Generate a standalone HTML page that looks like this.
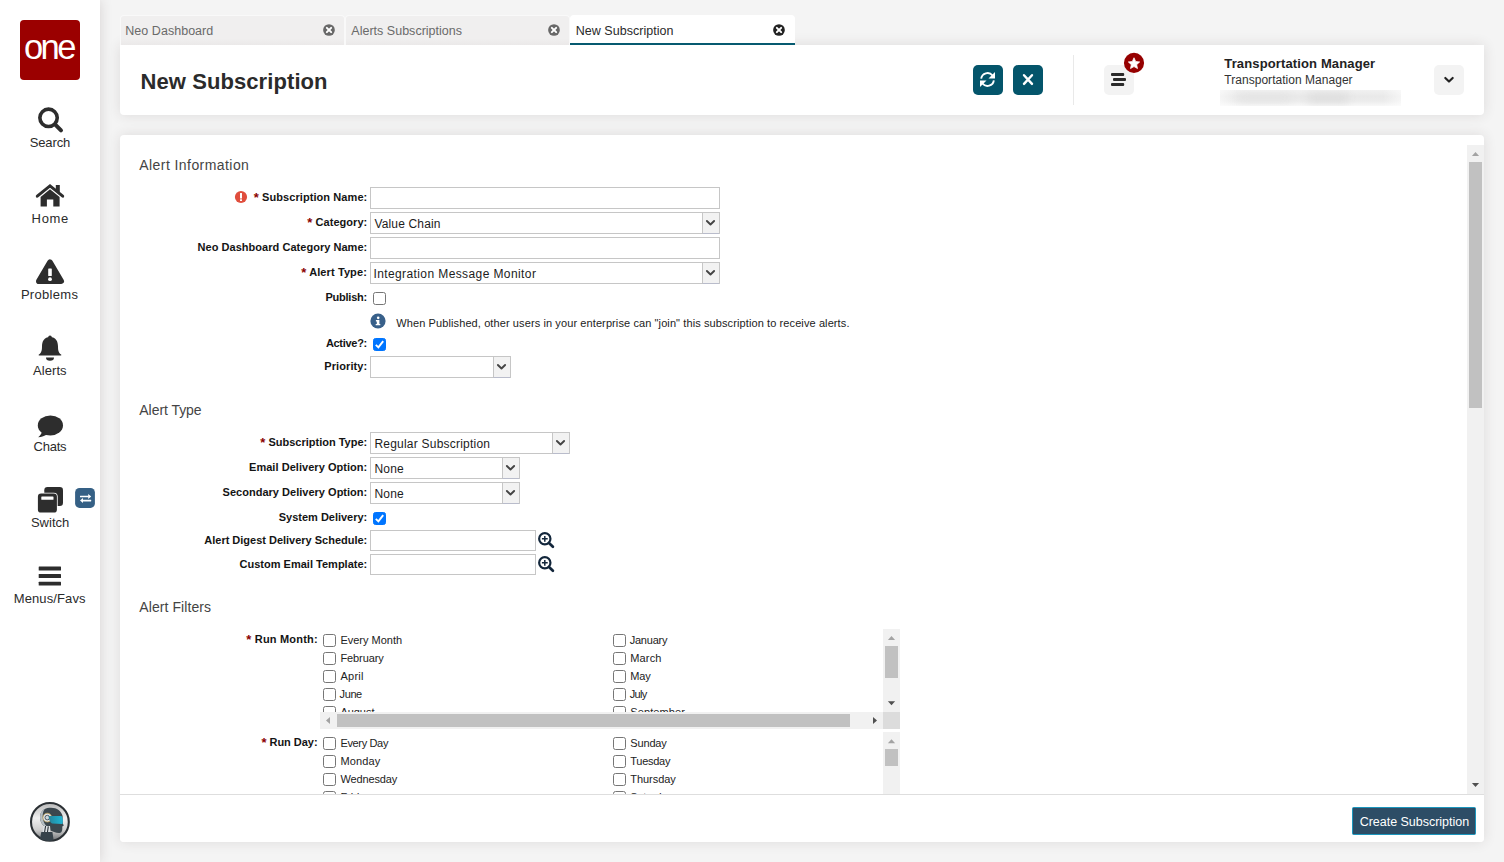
<!DOCTYPE html>
<html lang="en">
<head>
<meta charset="utf-8">
<title>New Subscription</title>
<style>
*{box-sizing:border-box;margin:0;padding:0}
html,body{width:1504px;height:862px;overflow:hidden}
body{background:#f4f4f4;font-family:"Liberation Sans",sans-serif;color:#222;position:relative}
.abs{position:absolute}
.t{position:absolute;white-space:nowrap;line-height:1}
#side{position:absolute;left:0;top:0;width:100px;height:862px;background:#fff;box-shadow:0 0 12px rgba(60,40,40,.16)}
#logo{position:absolute;left:20px;top:20px;width:60px;height:60px;border-radius:4px;background:#9b0000}
.nav{position:absolute;left:0;width:100px;text-align:center;font-size:13px;color:#2b2b2b;line-height:1}
.tab{position:absolute;top:15px;height:30px;border-radius:4px 4px 0 0;background:linear-gradient(180deg,#f0efef 0,#f0efef 78%,#ebe9e9 100%);border:1px solid #f9f9f9;border-bottom:none}
.tab.on{background:#fff;border:none;border-bottom:2px solid #065a70}
#head{position:absolute;left:120px;top:45px;width:1364px;height:70px;background:#fff;border-radius:0 0 4px 4px;box-shadow:0 0 13px rgba(60,40,40,.12)}
#main{position:absolute;left:120px;top:135px;width:1364px;height:707px;background:#fff;border-radius:4px;box-shadow:0 0 13px rgba(60,40,40,.12)}
.sq{position:absolute;width:30px;height:30px;border-radius:5px}
.lbl{position:absolute;font-size:11px;font-weight:700;color:#111;white-space:nowrap;line-height:1;text-align:right}
.lbl i{font-style:normal;color:#8b0000;font-size:13px;line-height:0;position:relative;top:1.6px;margin-left:-.8px}
.inp{position:absolute;background:#fff;border:1px solid #c6c6c6;height:22px}
.inp .v{position:absolute;left:4px;top:4px;font-size:12px;line-height:14px;white-space:nowrap;color:#1a1a1a}
.trg{position:absolute;right:0;top:0;width:17px;background:#f2f2f2;border-left:1px solid #c6c6c6;border-bottom:1px solid #b9bccb}
.cb{position:absolute;width:13px;height:13px;border:1px solid #767676;border-radius:2.5px;background:#fff}
.cb.on{background:#0075ff;border-color:#0075ff}
.cl{position:absolute;font-size:11px;white-space:nowrap;line-height:1;color:#222}
.sec{position:absolute;left:139px;font-size:14px;color:#444;white-space:nowrap;line-height:1}
</style>
</head>
<body>
<div id="side"></div>
<div id="logo"></div>
<span class="t" style="left:23.90px;top:29.70px;font-size:34.6px;letter-spacing:-2.531px;color:#fff;">one</span>
<svg class="abs" style="left:0;top:0" width="100" height="862" viewBox="0 0 100 862">
<g fill="#2d2d2d" stroke="none">
<!-- search -->
<circle cx="48.55" cy="117.8" r="8.7" fill="none" stroke="#2d2d2d" stroke-width="3.6"/>
<path d="M55.3 124.6 L61 130.4" stroke="#2d2d2d" stroke-width="4" stroke-linecap="round" fill="none"/>
<!-- home -->
<path d="M37.3 196.2 L50 185.9 L62.7 196.2" fill="none" stroke="#2d2d2d" stroke-width="3" stroke-linecap="round" stroke-linejoin="miter"/>
<rect x="55.8" y="185" width="4" height="7"/>
<path d="M40.6 197 L50 189.3 L59.6 197 V206.4 H53.3 V199.6 H46.9 V206.4 H40.6 Z"/>
<!-- problems -->
<path d="M50 262.2 L61.2 281.2 H38.8 Z" stroke="#2d2d2d" stroke-width="5.6" stroke-linejoin="round"/>
<rect x="48.2" y="268.4" width="3.6" height="7.6" rx=".6" fill="#fff"/>
<circle cx="50" cy="279.2" r="1.9" fill="#fff"/>
<!-- bell -->
<circle cx="50" cy="337.2" r="1.8"/>
<path d="M50 337 C44 337 42 341.5 42 346.5 C42 351 41.2 352.8 38.9 354.6 C38.4 355 38.7 355.6 39.3 355.6 H60.7 C61.3 355.6 61.6 355 61.1 354.6 C58.8 352.8 58 351 58 346.5 C58 341.5 56 337 50 337 Z"/>
<path d="M46 357.5 H54 A4 3.2 0 0 1 46 357.5 Z"/>
<!-- chat -->
<ellipse cx="50.4" cy="425.4" rx="12.6" ry="10"/>
<path d="M42.5 430 C42 433 40.5 435.5 38.2 437.3 C41.5 437.2 45 436 47.5 434 Z"/>
<!-- switch -->
<rect x="44.3" y="487" width="18.7" height="19" rx="3.2"/>
<rect x="37.1" y="492.8" width="20.6" height="20.5" rx="3.8" fill="#fff"/>
<rect x="37.9" y="493.6" width="19" height="19" rx="3.2"/>
<rect x="41.3" y="496.4" width="12.2" height="3.4" rx=".6" fill="#fff"/>
<!-- bars -->
<rect x="38.7" y="566.6" width="22.3" height="3.8" rx=".5"/>
<rect x="38.7" y="574.1" width="22.3" height="3.8" rx=".5"/>
<rect x="38.7" y="581.8" width="22.3" height="3.8" rx=".5"/>
</g>
<!-- switch badge -->
<rect x="75.1" y="488" width="19.8" height="19.9" rx="4.4" fill="#356085"/>
<g fill="#fff">
<rect x="80" y="495.7" width="8.6" height="1.6" rx=".3"/><path d="M88.2 494 L91.2 496.5 L88.2 499 Z"/>
<rect x="82.6" y="499.8" width="8.6" height="1.6" rx=".3"/><path d="M83 498.1 L80 500.6 L83 503.1 Z"/>
</g>
<!-- avatar -->
<defs><linearGradient id="vg" x1="0" y1="0" x2="1" y2="0"><stop offset="0" stop-color="#2b8297"/><stop offset=".5" stop-color="#1f9fba"/><stop offset="1" stop-color="#22b4d2"/></linearGradient><linearGradient id="ag" x1="0" y1="0" x2="0" y2="1"><stop offset="0" stop-color="#b9b9b9"/><stop offset=".4" stop-color="#f0f0f0"/><stop offset=".7" stop-color="#d0d0d0"/><stop offset="1" stop-color="#6f7275"/></linearGradient></defs>
<circle cx="49.9" cy="821.9" r="18.9" fill="url(#ag)" stroke="#2b3034" stroke-width="2.1"/>
<path d="M43.4 825.5 L50.2 826 L49.8 832.2 L42.6 832.2 Z" fill="#dde2e5"/>
<path d="M45.6 826 L44.6 832 M48.3 826.4 L47.5 832" stroke="#2b3238" stroke-width="1.1" fill="none"/>
<path d="M41.3 832 H52.4 L53.6 840 C49 841.6 44 841 40 838.8 Z" fill="#36424a"/>
<path d="M44 826 C40.5 823 39.3 818 40.5 814 C42 809.5 46 807.7 51 807.7 C57 807.7 61.5 811 62.6 816 L62.8 823.5 L63.8 825.6 L62.3 826.6 L62.3 829 C62.3 831.5 61 833.2 59 833 C55.5 832.7 52.5 831.5 50.5 830.4 L50 826 Z" fill="#3b474e"/>
<path d="M44 826 C40.5 823 39.3 818 40.5 814 C41.3 811.6 42.8 810 44.5 809 C42.6 812 42.2 816 43.2 820 C43.8 822.5 45 824.5 46.5 826 Z" fill="#b4bdc2"/>
<circle cx="47.3" cy="817.6" r="4.4" fill="#dfe6ea" stroke="#c9a24f" stroke-width=".7"/>
<circle cx="47.3" cy="817.6" r="2.3" fill="#cfd6da" stroke="#46525a" stroke-width=".9"/>
<path d="M48.6 816 L61.4 815.9 C63 817 63.2 822.4 62.3 824 L52 823.6 C50.2 822.4 48.8 819.5 48.6 816 Z" fill="url(#vg)"/>
</svg>
<span class="t" style="left:29.70px;top:136.00px;font-size:13px;letter-spacing:-0.112px;color:#2b2b2b;">Search</span><span class="t" style="left:31.60px;top:212.00px;font-size:13px;letter-spacing:0.651px;color:#2b2b2b;">Home</span><span class="t" style="left:20.90px;top:288.00px;font-size:13px;letter-spacing:0.299px;color:#2b2b2b;">Problems</span><span class="t" style="left:33.00px;top:364.00px;font-size:13px;letter-spacing:0.074px;color:#2b2b2b;">Alerts</span><span class="t" style="left:33.50px;top:440.00px;font-size:13px;letter-spacing:-0.215px;color:#2b2b2b;">Chats</span><span class="t" style="left:30.90px;top:516.00px;font-size:13px;letter-spacing:0.028px;color:#2b2b2b;">Switch</span><span class="t" style="left:13.70px;top:592.00px;font-size:13px;letter-spacing:0.111px;color:#2b2b2b;">Menus/Favs</span>

<div id="head"></div>
<div class="tab" style="left:120px;width:224.5px"></div><div class="tab" style="left:345px;width:224.5px"></div><div class="tab on" style="left:570px;width:225px"></div>
<span class="t" style="left:125.30px;top:24.75px;font-size:12.5px;letter-spacing:0.033px;color:#6a6a6a;">Neo Dashboard</span><span class="t" style="left:351.30px;top:24.75px;font-size:12.5px;letter-spacing:0.015px;color:#6a6a6a;">Alerts Subscriptions</span><span class="t" style="left:575.70px;top:24.75px;font-size:12.5px;letter-spacing:0.032px;color:#2a2a2a;">New Subscription</span><svg class="abs" style="left:321.9px;top:22.9px" width="14" height="14" viewBox="-7 -7 14 14"><circle r="5.85" fill="#686868"/><path d="M-2.15 -2.15 L2.15 2.15 M2.15 -2.15 L-2.15 2.15" stroke="#fff" stroke-width="2" stroke-linecap="round"/></svg><svg class="abs" style="left:547.0px;top:22.9px" width="14" height="14" viewBox="-7 -7 14 14"><circle r="5.85" fill="#686868"/><path d="M-2.15 -2.15 L2.15 2.15 M2.15 -2.15 L-2.15 2.15" stroke="#fff" stroke-width="2" stroke-linecap="round"/></svg><svg class="abs" style="left:772.0px;top:22.9px" width="14" height="14" viewBox="-7 -7 14 14"><circle r="5.85" fill="#222"/><path d="M-2.15 -2.15 L2.15 2.15 M2.15 -2.15 L-2.15 2.15" stroke="#fff" stroke-width="2" stroke-linecap="round"/></svg>
<span class="t" style="left:140.50px;top:70.50px;font-size:22px;font-weight:700;letter-spacing:0.083px;color:#2b2b2b;">New Subscription</span>
<div class="sq" style="left:973px;top:65px;background:#04556b"></div><div class="sq" style="left:1013px;top:65px;background:#04556b"></div><div class="abs" style="left:1073px;top:55px;width:1px;height:50px;background:#e9e9e9"></div><div class="sq" style="left:1104px;top:65px;background:#f3f3f3"></div><div class="sq" style="left:1434px;top:65px;background:#f3f3f3"></div>
<svg class="abs" style="left:960px;top:45px" width="524" height="70" viewBox="960 45 524 70">
<!-- refresh -->
<g fill="none" stroke="#fff" stroke-width="1.9" stroke-linecap="butt">
<path d="M981.16 78.6 A6.4 6.4 0 0 1 992.5 75.5"/>
<path d="M993.84 80.4 A6.4 6.4 0 0 1 982.5 83.5"/>
</g>
<path d="M995 72.1 V78.6 H988.5 Z" fill="#fff"/>
<path d="M980 86.9 V80.4 H986.5 Z" fill="#fff"/>
<!-- close -->
<path d="M1024 75.2 L1032 83.9 M1032 75.2 L1024 83.9" stroke="#fff" stroke-width="2.4" stroke-linecap="round"/>
<!-- menu bars -->
<g fill="#2b2b2b"><rect x="1111" y="73" width="13.2" height="2.9" rx="1"/><rect x="1113" y="78" width="13" height="2.9" rx="1"/><rect x="1111" y="83.1" width="13.2" height="2.9" rx="1"/></g>
<!-- star badge -->
<circle cx="1134" cy="62.9" r="10.05" fill="#960000"/>
<path d="M1134.00 57.75 L1135.68 61.44 L1139.71 61.90 L1136.71 64.63 L1137.53 68.60 L1134.00 66.60 L1130.47 68.60 L1131.29 64.63 L1128.29 61.90 L1132.32 61.44 Z" fill="#fff" stroke="#fff" stroke-width=".7" stroke-linejoin="round"/>
<!-- chevron -->
<path d="M1445.3 77.9 L1449 81.6 L1452.7 77.9" fill="none" stroke="#222" stroke-width="2.1" stroke-linecap="round" stroke-linejoin="round"/>
</svg>
<span class="t" style="left:1224.30px;top:57.00px;font-size:13px;font-weight:700;letter-spacing:0.132px;color:#222;">Transportation Manager</span><span class="t" style="left:1224.30px;top:74.00px;font-size:12px;letter-spacing:0.032px;color:#333;">Transportation Manager</span><div class="abs" style="left:1220px;top:90px;width:181px;height:16px;overflow:hidden"><div class="abs" style="left:0;top:0;width:181px;height:16px;background:linear-gradient(180deg,#f1f1f1 0%,#e9e9e9 40%,#ececec 70%,#f8f8f8 100%)"></div><div class="abs" style="left:88px;top:4px;width:40px;height:8px;background:#dcdcdc;filter:blur(4px)"></div><div class="abs" style="left:20px;top:5px;width:50px;height:6px;background:#e2e2e2;filter:blur(4px)"></div><div class="abs" style="left:0;top:0;width:181px;height:16px;background:linear-gradient(90deg,rgba(255,255,255,.55),rgba(255,255,255,0) 10%,rgba(255,255,255,0) 90%,rgba(255,255,255,.55))"></div></div>

<div id="main"></div>
<span class="t" style="left:139.30px;top:158.00px;font-size:14px;letter-spacing:0.430px;color:#444;">Alert Information</span><svg class="abs" style="left:233.95px;top:189.95px" width="14" height="14" viewBox="-7 -7 14 14"><circle r="6.1" fill="#e04e3d"/><rect x="-1" y="-4.05" width="2" height="5.6" rx=".3" fill="#fff"/><rect x="-1" y="2.3" width="2" height="1.8" rx=".3" fill="#fff"/></svg>
<span class="lbl" style="left:254.50px;top:191.50px;font-size:11px;font-weight:700;letter-spacing:0.080px;color:#141414;"><i>*</i> Subscription Name:</span><div class="inp" style="left:370px;top:187px;width:350px;height:22px"></div>
<span class="lbl" style="left:308.10px;top:216.50px;font-size:11px;font-weight:700;letter-spacing:0.048px;color:#141414;"><i>*</i> Category:</span><div class="inp" style="left:370px;top:212px;width:350px;height:22px"><div class="trg" style="height:21px"></div><svg class="abs" style="right:3px;top:5.8px" width="11" height="8" viewBox="0 0 11 8"><path d="M1.9 2 L5.5 5.5 L9.1 2" fill="none" stroke="#444" stroke-width="1.9" stroke-linecap="round" stroke-linejoin="round"/></svg></div><span class="t" style="left:374.40px;top:218.00px;font-size:12px;letter-spacing:0.159px;color:#1c1c1c;">Value Chain</span>
<span class="lbl" style="left:197.60px;top:241.50px;font-size:11px;font-weight:700;letter-spacing:0.035px;color:#141414;">Neo Dashboard Category Name:</span><div class="inp" style="left:370px;top:237px;width:350px;height:22px"></div>
<span class="lbl" style="left:302.00px;top:266.50px;font-size:11px;font-weight:700;letter-spacing:0.107px;color:#141414;"><i>*</i> Alert Type:</span><div class="inp" style="left:370px;top:262px;width:350px;height:22px"><div class="trg" style="height:21px"></div><svg class="abs" style="right:3px;top:5.8px" width="11" height="8" viewBox="0 0 11 8"><path d="M1.9 2 L5.5 5.5 L9.1 2" fill="none" stroke="#444" stroke-width="1.9" stroke-linecap="round" stroke-linejoin="round"/></svg></div><span class="t" style="left:373.40px;top:268.00px;font-size:12px;letter-spacing:0.401px;color:#1c1c1c;">Integration Message Monitor</span>
<span class="lbl" style="left:325.40px;top:291.50px;font-size:11px;font-weight:700;letter-spacing:-0.218px;color:#141414;">Publish:</span><div class="cb" style="left:373px;top:292px"></div><svg class="abs" style="left:370.05px;top:312.85px" width="16" height="16" viewBox="-8 -8 16 16"><circle r="7.6" fill="#38608a"/><circle cx=".2" cy="-3.15" r="1.3" fill="#fff"/><path d="M-2.1 -.9 H1.4 V2.9 H2.3 V4.3 H-2.3 V2.9 H-1.2 V.5 H-2.1 Z" fill="#fff"/></svg><span class="t" style="left:396.30px;top:317.50px;font-size:11px;letter-spacing:0.101px;color:#222;">When Published, other users in your enterprise can "join" this subscription to receive alerts.</span>
<span class="lbl" style="left:325.90px;top:337.50px;font-size:11px;font-weight:700;letter-spacing:-0.291px;color:#141414;">Active?:</span><div class="cb on" style="left:373px;top:338px"><svg class="abs" style="left:-1px;top:-1px" width="13" height="13" viewBox="0 0 13 13"><path d="M2.8 6.9 L5.4 9.4 L10.2 3.1" fill="none" stroke="#fff" stroke-width="1.9" stroke-linecap="butt" stroke-linejoin="miter"/></svg></div><span class="lbl" style="left:324.20px;top:360.50px;font-size:11px;font-weight:700;letter-spacing:0.111px;color:#141414;">Priority:</span><div class="inp" style="left:370px;top:356px;width:140.5px;height:22px"><div class="trg" style="height:21px"></div><svg class="abs" style="right:3px;top:5.8px" width="11" height="8" viewBox="0 0 11 8"><path d="M1.9 2 L5.5 5.5 L9.1 2" fill="none" stroke="#444" stroke-width="1.9" stroke-linecap="round" stroke-linejoin="round"/></svg></div>
<span class="t" style="left:139.30px;top:403.00px;font-size:14px;letter-spacing:-0.049px;color:#444;">Alert Type</span><span class="lbl" style="left:261.10px;top:436.50px;font-size:11px;font-weight:700;color:#141414;"><i>*</i> Subscription Type:</span><div class="inp" style="left:370px;top:432px;width:200px;height:22px"><div class="trg" style="height:21px"></div><svg class="abs" style="right:3px;top:5.8px" width="11" height="8" viewBox="0 0 11 8"><path d="M1.9 2 L5.5 5.5 L9.1 2" fill="none" stroke="#444" stroke-width="1.9" stroke-linecap="round" stroke-linejoin="round"/></svg></div><span class="t" style="left:374.40px;top:438.00px;font-size:12px;letter-spacing:0.220px;color:#1c1c1c;">Regular Subscription</span>
<span class="lbl" style="left:249.00px;top:461.50px;font-size:11px;font-weight:700;letter-spacing:0.043px;color:#141414;">Email Delivery Option:</span><div class="inp" style="left:370px;top:457px;width:150px;height:22px"><div class="trg" style="height:21px"></div><svg class="abs" style="right:3px;top:5.8px" width="11" height="8" viewBox="0 0 11 8"><path d="M1.9 2 L5.5 5.5 L9.1 2" fill="none" stroke="#444" stroke-width="1.9" stroke-linecap="round" stroke-linejoin="round"/></svg></div><span class="t" style="left:374.40px;top:463.00px;font-size:12px;letter-spacing:0.229px;color:#1c1c1c;">None</span>
<span class="lbl" style="left:222.60px;top:486.50px;font-size:11px;font-weight:700;letter-spacing:0.016px;color:#141414;">Secondary Delivery Option:</span><div class="inp" style="left:370px;top:482px;width:150px;height:22px"><div class="trg" style="height:21px"></div><svg class="abs" style="right:3px;top:5.8px" width="11" height="8" viewBox="0 0 11 8"><path d="M1.9 2 L5.5 5.5 L9.1 2" fill="none" stroke="#444" stroke-width="1.9" stroke-linecap="round" stroke-linejoin="round"/></svg></div><span class="t" style="left:374.40px;top:488.00px;font-size:12px;letter-spacing:0.229px;color:#1c1c1c;">None</span>
<span class="lbl" style="left:278.80px;top:511.50px;font-size:11px;font-weight:700;letter-spacing:-0.013px;color:#141414;">System Delivery:</span><div class="cb on" style="left:373px;top:512px"><svg class="abs" style="left:-1px;top:-1px" width="13" height="13" viewBox="0 0 13 13"><path d="M2.8 6.9 L5.4 9.4 L10.2 3.1" fill="none" stroke="#fff" stroke-width="1.9" stroke-linecap="butt" stroke-linejoin="miter"/></svg></div><span class="lbl" style="left:204.30px;top:534.50px;font-size:11px;font-weight:700;letter-spacing:-0.009px;color:#141414;">Alert Digest Delivery Schedule:</span><div class="inp" style="left:370px;top:530px;width:166px;height:21px"></div>
<span class="lbl" style="left:239.50px;top:558.50px;font-size:11px;font-weight:700;letter-spacing:0.011px;color:#141414;">Custom Email Template:</span><div class="inp" style="left:370px;top:554px;width:166px;height:21px"></div>
<svg class="abs" style="left:538px;top:532px" width="18" height="18" viewBox="0 0 18 18"><circle cx="6.8" cy="6.8" r="5.65" fill="none" stroke="#12263b" stroke-width="2.2"/><path d="M11 11 L14.9 14.8" stroke="#12263b" stroke-width="2.7" stroke-linecap="round"/><path d="M3.9 6.75 H9.7 M6.8 3.9 V9.7" stroke="#12263b" stroke-width="1.5"/></svg><svg class="abs" style="left:538px;top:555.95px" width="18" height="18" viewBox="0 0 18 18"><circle cx="6.8" cy="6.8" r="5.65" fill="none" stroke="#12263b" stroke-width="2.2"/><path d="M11 11 L14.9 14.8" stroke="#12263b" stroke-width="2.7" stroke-linecap="round"/><path d="M3.9 6.75 H9.7 M6.8 3.9 V9.7" stroke="#12263b" stroke-width="1.5"/></svg>
<span class="t" style="left:139.30px;top:600.00px;font-size:14px;letter-spacing:0.084px;color:#444;">Alert Filters</span><span class="lbl" style="left:247.00px;top:633.50px;font-size:11px;font-weight:700;letter-spacing:0.204px;color:#141414;"><i>*</i> Run Month:</span><span class="lbl" style="left:262.20px;top:736.50px;font-size:11px;font-weight:700;letter-spacing:-0.017px;color:#141414;"><i>*</i> Run Day:</span><div class="abs" style="left:0;top:0;width:883px;height:712px;overflow:hidden"><div class="cb" style="left:323px;top:634px"></div><span class="cl" style="left:340.40px;top:634.50px;font-size:11px;color:#222;">Every Month</span><div class="cb" style="left:613px;top:634px"></div><span class="cl" style="left:629.70px;top:634.50px;font-size:11px;letter-spacing:-0.222px;color:#222;">January</span><div class="cb" style="left:323px;top:652px"></div><span class="cl" style="left:340.40px;top:652.50px;font-size:11px;letter-spacing:-0.088px;color:#222;">February</span><div class="cb" style="left:613px;top:652px"></div><span class="cl" style="left:630.30px;top:652.50px;font-size:11px;letter-spacing:0.139px;color:#222;">March</span><div class="cb" style="left:323px;top:670px"></div><span class="cl" style="left:340.40px;top:670.50px;font-size:11px;letter-spacing:0.285px;color:#222;">April</span><div class="cb" style="left:613px;top:670px"></div><span class="cl" style="left:630.30px;top:670.50px;font-size:11px;letter-spacing:-0.140px;color:#222;">May</span><div class="cb" style="left:323px;top:688px"></div><span class="cl" style="left:339.60px;top:688.50px;font-size:11px;letter-spacing:-0.412px;color:#222;">June</span><div class="cb" style="left:613px;top:688px"></div><span class="cl" style="left:629.70px;top:688.50px;font-size:11px;letter-spacing:-0.687px;color:#222;">July</span><div class="cb" style="left:323px;top:706px"></div><span class="cl" style="left:340.40px;top:706.50px;font-size:11px;letter-spacing:-0.038px;color:#222;">August</span><div class="cb" style="left:613px;top:706px"></div><span class="cl" style="left:630.30px;top:706.50px;font-size:11px;letter-spacing:0.107px;color:#222;">September</span></div>
<div class="abs" style="left:0;top:0;width:883px;height:794px;overflow:hidden"><div class="cb" style="left:323px;top:737px"></div><span class="cl" style="left:340.40px;top:737.50px;font-size:11px;letter-spacing:-0.342px;color:#222;">Every Day</span><div class="cb" style="left:613px;top:737px"></div><span class="cl" style="left:630.30px;top:737.50px;font-size:11px;letter-spacing:-0.162px;color:#222;">Sunday</span><div class="cb" style="left:323px;top:755px"></div><span class="cl" style="left:340.40px;top:755.50px;font-size:11px;letter-spacing:0.133px;color:#222;">Monday</span><div class="cb" style="left:613px;top:755px"></div><span class="cl" style="left:630.30px;top:755.50px;font-size:11px;letter-spacing:-0.280px;color:#222;">Tuesday</span><div class="cb" style="left:323px;top:773px"></div><span class="cl" style="left:340.40px;top:773.50px;font-size:11px;letter-spacing:-0.124px;color:#222;">Wednesday</span><div class="cb" style="left:613px;top:773px"></div><span class="cl" style="left:630.30px;top:773.50px;font-size:11px;letter-spacing:-0.050px;color:#222;">Thursday</span><div class="cb" style="left:323px;top:791px"></div><span class="cl" style="left:340.40px;top:791.50px;font-size:11px;letter-spacing:-0.012px;color:#222;">Friday</span><div class="cb" style="left:613px;top:791px"></div><span class="cl" style="left:630.30px;top:791.50px;font-size:11px;letter-spacing:-0.218px;color:#222;">Saturday</span></div>
<div class="abs" style="left:883px;top:629px;width:17px;height:83px;background:#f1f1f1"></div><div class="abs" style="left:885px;top:646px;width:13px;height:32px;background:#c1c1c1"></div><div class="abs" style="left:320px;top:712px;width:563px;height:17px;background:#f1f1f1"></div><div class="abs" style="left:883px;top:712px;width:17px;height:17px;background:#dcdcdc"></div><div class="abs" style="left:337px;top:714px;width:513px;height:13px;background:#c1c1c1"></div><div class="abs" style="left:883px;top:732px;width:17px;height:62px;background:#f1f1f1"></div><div class="abs" style="left:885px;top:749px;width:13px;height:17px;background:#c1c1c1"></div>
<div class="abs" style="left:1467px;top:145px;width:17px;height:649px;background:#f1f1f1"></div><div class="abs" style="left:1469px;top:162px;width:13px;height:246px;background:#c1c1c1"></div>
<svg class="abs" style="left:0;top:0" width="1504" height="862" viewBox="0 0 1504 862"><path d="M1475.5 151.9 l3.6 4 h-7.2z" fill="#a3a3a3"/><path d="M1475.5 787 l3.6 -4 h-7.2z" fill="#505050"/><path d="M891.5 636 l3.6 4 h-7.2z" fill="#a3a3a3"/><path d="M891.5 705.2 l3.6 -4 h-7.2z" fill="#505050"/><path d="M891.5 739.3 l3.6 4 h-7.2z" fill="#a3a3a3"/><path d="M326 720.5 l4 -3.6 v7.2z" fill="#a3a3a3"/><path d="M877 720.5 l-4 -3.6 v7.2z" fill="#505050"/></svg>
<div class="abs" style="left:120px;top:794px;width:1364px;height:48px;background:#fff;border-top:1px solid #dedede;border-radius:0 0 4px 4px"></div><div class="abs" style="left:1352px;top:807px;width:124px;height:28px;background:#2d4d66;border:1px solid #1b96bd;border-radius:1.5px"></div><span class="t" style="left:1359.70px;top:815.75px;font-size:12.5px;letter-spacing:-0.018px;color:#fff;">Create Subscription</span>

</body>
</html>
